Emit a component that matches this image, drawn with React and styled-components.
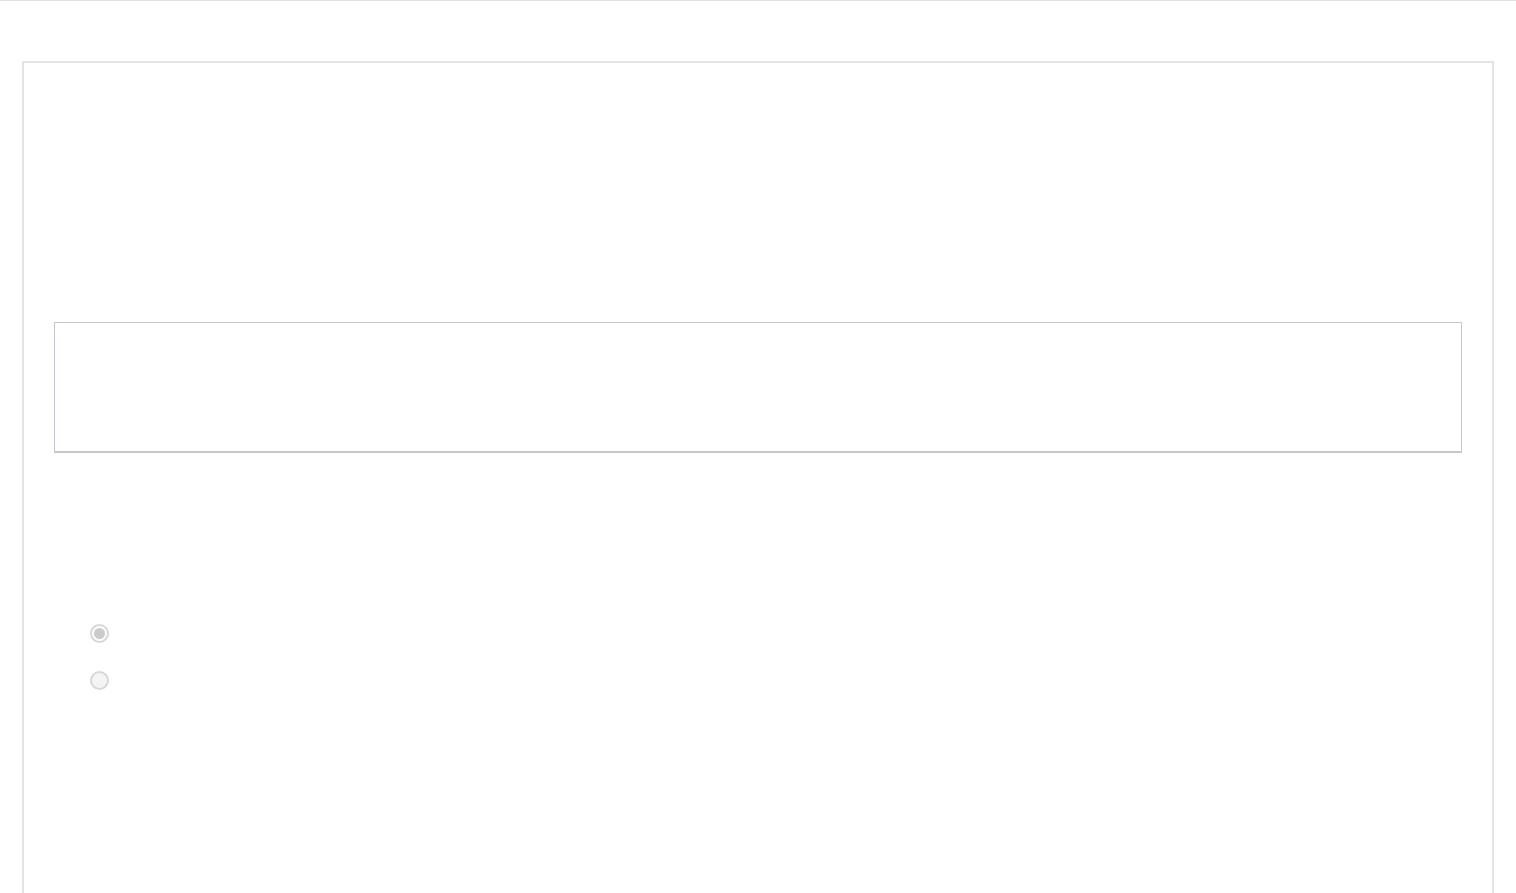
import React from 'react'
import styled, { createGlobalStyle } from 'styled-components'

const Global = createGlobalStyle`
    html, body {
        margin: 0;
        padding: 0;
        background: #fff;
        font-family: "Liberation Sans", Arial, sans-serif;
    }
`

const Page = styled.div`
    border-top: 1px solid #e2e2e2;
    padding: 60px 22px 0;
    overflow: hidden;
    box-sizing: border-box;
    height: 893px;
`

const Card = styled.section`
    border: 2px solid #e4e4e4;
    border-bottom: none;
    padding: 259px 30px 0;
    height: 900px;
    box-sizing: border-box;
`

const Field = styled.div`
    height: 131px;
    border: 1px solid #c4c9d1;
    border-bottom-width: 2px;
    box-sizing: border-box;
    background: #fff;
`

const Options = styled.div`
    display: flex;
    flex-direction: column;
    gap: 28px;
    margin-top: 171px;
    padding-left: 36px;
`

const Radio = styled.span`
    width: 19px;
    height: 19px;
    border-radius: 50%;
    border: 2px solid #d8d8d8;
    background: ${({ checked }) => (checked ? '#fdfdfd' : '#f4f4f4')};
    box-sizing: border-box;
    display: flex;
    align-items: center;
    justify-content: center;

    &::after {
        content: '';
        width: 11px;
        height: 11px;
        border-radius: 50%;
        background: ${({ checked }) => (checked ? '#cbcbcb' : 'transparent')};
    }
`

const App = () => {
    return (
        <>
            <Global />
            <Page>
                <Card>
                    <Field />
                    <Options>
                        <Radio checked role="radio" aria-checked="true" aria-disabled="true" />
                        <Radio role="radio" aria-checked="false" aria-disabled="true" />
                    </Options>
                </Card>
            </Page>
        </>
    )
}

export default App
